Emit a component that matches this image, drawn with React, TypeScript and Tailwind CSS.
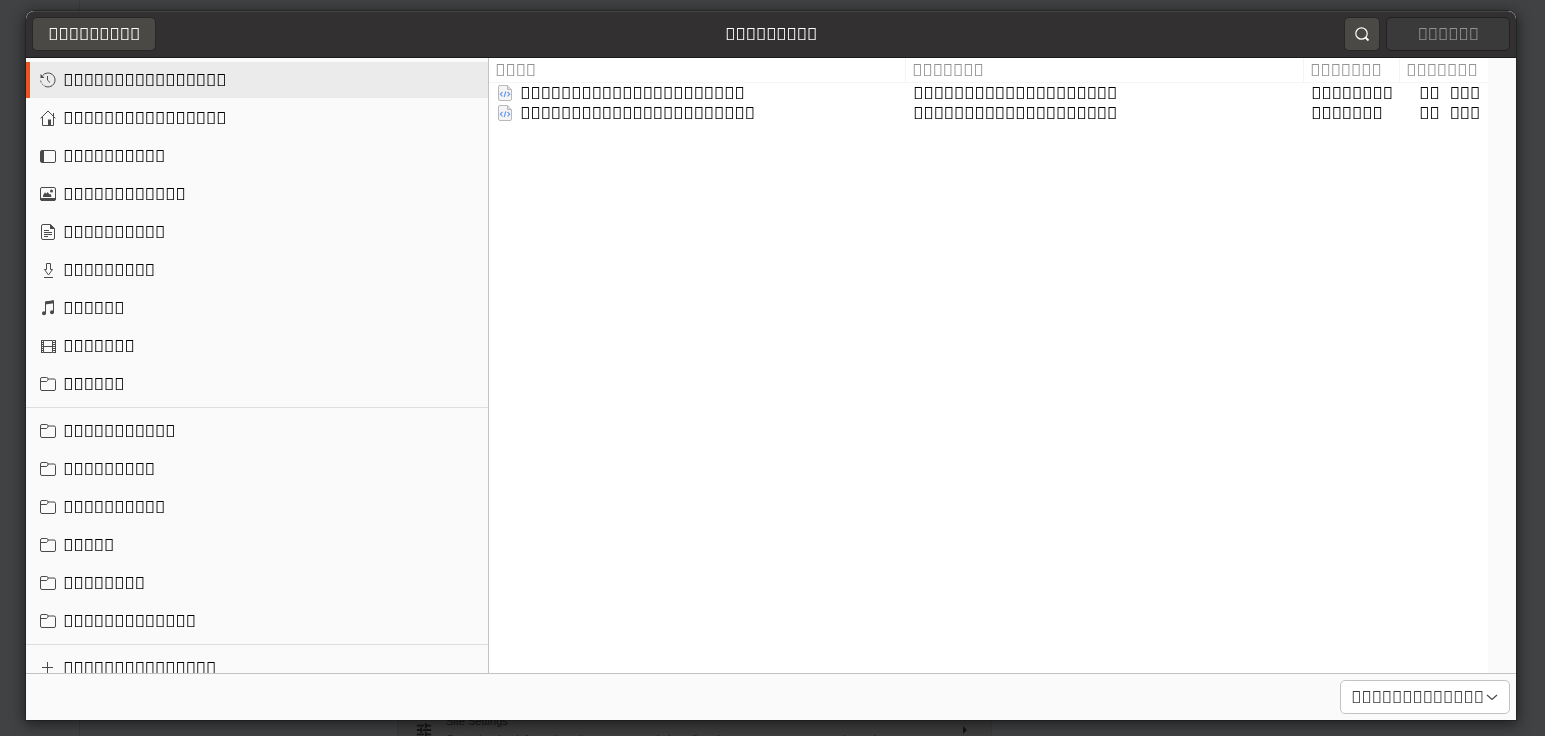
import type { ReactNode } from "react";

// the labels have no glyphs in the UI font, so each one shows as a run of empty boxes
const boxes = (count: number) => "\uE123".repeat(count);

type IconName = "recent" | "home" | "desktop" | "pictures" | "documents" | "downloads" | "music" | "videos" | "folder" | "plus";

interface Place {
    icon: IconName;
    label: string;
}

const groups: Place[][] = [
    [
        { icon: "recent", label: boxes(16) },
        { icon: "home", label: boxes(16) },
        { icon: "desktop", label: boxes(10) },
        { icon: "pictures", label: boxes(12) },
        { icon: "documents", label: boxes(10) },
        { icon: "downloads", label: boxes(9) },
        { icon: "music", label: boxes(6) },
        { icon: "videos", label: boxes(7) },
        { icon: "folder", label: boxes(6) },
    ],
    [
        { icon: "folder", label: boxes(11) },
        { icon: "folder", label: boxes(9) },
        { icon: "folder", label: boxes(10) },
        { icon: "folder", label: boxes(5) },
        { icon: "folder", label: boxes(8) },
        { icon: "folder", label: boxes(13) },
    ],
    [{ icon: "plus", label: boxes(15) }],
];

const files = [
    { name: boxes(22), location: boxes(20), size: boxes(8), day: boxes(2), month: boxes(3) },
    { name: boxes(23), location: boxes(20), size: boxes(7), day: boxes(2), month: boxes(3) },
];

const paths: Record<IconName, ReactNode> = {
    recent: (
        <>
            <path d="M2.6 3.6A7 7 0 1 1 4.500 14" />
            <path d="M3.400 13.200A7 7 0 0 1 .6 7.500" strokeDasharray="2 1.400" />
            <path d="M7.500 4v4.200l2.500 2.300" />
            <path d="M.5 2v4h4z" fill="currentColor" stroke="none" />
        </>
    ),
    home: (
        <>
            <path d="M.6 8.300 8 1l7.400 7.300M2.500 7v8.500h11V7M13.500 3v3" />
            <path d="M8 9.500h3v6H8z" fill="currentColor" stroke="none" />
        </>
    ),
    desktop: (
        <>
            <rect x=".5" y="2.500" width="15" height="12" rx="1.500" />
            <path d="M1 3h3v11H1z" fill="currentColor" stroke="none" />
        </>
    ),
    pictures: (
        <>
            <rect x=".5" y="1.500" width="15" height="13" rx="1.500" />
            <path d="M.5 12.500h15v1.200l-1 .8h-13l-1-.8z" fill="currentColor" />
            <path d="M3 11V9.500l2-3.200 1.400 1.500L7.600 6l2 2.600.7-.8 1 1.700V11z" fill="currentColor" stroke="none" />
            <circle cx="11.500" cy="5" r="1.500" fill="currentColor" stroke="none" />
        </>
    ),
    documents: (
        <>
            <path d="M3 .5h7.500l4 4V14a1.500 1.500 0 0 1-1.500 1.500H3A1.500 1.500 0 0 1 1.500 14V2A1.500 1.500 0 0 1 3 .5z" />
            <path d="M10 0v5h5z" fill="currentColor" stroke="none" />
            <path d="M4 6.500h5M4 8.500h8M4 10.500h8M4 12.500h4" />
        </>
    ),
    downloads: <path d="M6.500 1.500h4v6h2L8.500 13l-4-5.500h2zM4 15.500h9" />,
    music: (
        <>
            <path d="M5.500 13V2.200L13.500 1v11" />
            <path d="M5 1.500 14 .3v3L5 4.500z" fill="currentColor" stroke="none" />
            <circle cx="4" cy="13.300" r="2" fill="currentColor" stroke="none" />
            <circle cx="12" cy="12.300" r="2" fill="currentColor" stroke="none" />
        </>
    ),
    videos: (
        <>
            <path d="M3.500 2.500h9v12h-9zM3.500 8.500h9M1.500 2v13M15.500 2v13" />
            <path d="M2.500 2v13M14 2v13" strokeDasharray="1 1" strokeWidth="2" />
        </>
    ),
    folder: (
        <>
            <path d="M.5 4V3A1.500 1.500 0 0 1 2 1.500h4.500A1.500 1.500 0 0 1 8 3h6A1.500 1.500 0 0 1 15.500 4.500V13a1.500 1.500 0 0 1-1.500 1.500H2A1.500 1.500 0 0 1 .5 13z" />
            <path d="M.5 5.500h5.700c1 0 1-.6 1.800-1.500V3" />
        </>
    ),
    plus: <path d="M7.500 2v11M2 7.500h11" />,
};

function PlaceIcon({ name }: { name: IconName }) {
    return (
        <svg viewBox="0 0 16 16" className="size-4 shrink-0 text-[#4a4a48]" fill="none" stroke="currentColor" aria-hidden="true">
            {paths[name]}
        </svg>
    );
}

function FileIcon() {
    return (
        <svg viewBox="0 0 14 16" className="h-4 w-3.5 shrink-0" fill="none" aria-hidden="true">
            <path d="M2 .5h7.500l4 4V14a1.500 1.500 0 0 1-1.500 1.500H2A1.500 1.500 0 0 1 .5 14V2A1.500 1.500 0 0 1 2 .5z" fill="#f4f4f4" stroke="#b9b9b9" />
            <path d="M9.500.5v4h4" fill="#dedede" stroke="#b9b9b9" />
            <path d="M4.500 7 2.300 9.200l2.200 2.200M9.500 7l2.200 2.200-2.200 2.200M7.800 6.500l-1.600 5.500" stroke="#6d9af5" strokeWidth="1.200" />
        </svg>
    );
}

function BackgroundPage() {
    return (
        <div className="absolute inset-0 overflow-hidden" aria-hidden="true">
            <div className="h-full w-20 border-r border-[#393b3d]" />
            <div className="absolute bottom-0 left-[397px] flex h-6 w-[595px] items-start gap-3.5 border-x border-[#393a3b] bg-[#3e3e3e] pl-[18px] pr-6 font-['Liberation_Sans',sans-serif] text-[#161616]">
                <svg viewBox="0 0 18 18" className="mt-2.5 size-4 shrink-0" fill="none" stroke="currentColor" strokeWidth="2">
                    <path d="M1 4h8M12 4h5M11 1v6M1 9h4M8 9h9M6 6v6M1 14h8M12 14h5M11 11v6" />
                </svg>
                <div className="grow whitespace-nowrap text-[11px] leading-[18px]">
                    <p>Site Settings</p>
                    <p className="text-[#222222]">Controls what information sites can use and show (location, camera, pop-ups, and more)</p>
                </div>
                <svg viewBox="0 0 4 8" className="mt-3.5 h-2 w-1 shrink-0" fill="currentColor">
                    <path d="M0 0 4 4 0 8z" />
                </svg>
            </div>
        </div>
    );
}

export default function App() {
    return (
        <div className="relative h-screen overflow-hidden bg-[#404244] pt-[11px] pr-[29px] pb-4 pl-[26px] font-['Noto_Sans',sans-serif] text-[17px] leading-5 text-black">
            <BackgroundPage />

            <div className="relative flex h-full flex-col overflow-hidden rounded-t-lg bg-[#fafafa] shadow-[0_3px_14px_2px_rgba(0,0,0,0.5),0_0_0_1px_rgba(0,0,0,0.25)] will-change-transform">
                <header className="grid h-[47px] shrink-0 grid-cols-[1fr_auto_1fr] items-center rounded-t-lg border-t border-b border-t-[#454545] border-b-[#1d191b] bg-[#323030] px-1.5 pb-0.5">
                    <button className="h-[34px] w-[124px] rounded-[5px] border border-[#282727] bg-[#4a4945] text-white">
                        {boxes(9)}
                    </button>

                    <h1 className="text-white">{boxes(9)}</h1>

                    <div className="flex justify-end gap-1.5">
                        <button aria-label="Search" className="flex h-[34px] w-9 items-center justify-center rounded-[5px] border border-[#282727] bg-[#4a4945] text-white">
                            <svg viewBox="0 0 16 16" className="size-4" fill="none" stroke="currentColor" strokeWidth="1.200">
                                <circle cx="7.500" cy="7.500" r="5.700" />
                                <path d="m11.500 11.500 3 3" strokeWidth="1.800" />
                            </svg>
                        </button>
                        <button disabled className="h-[34px] w-[124px] rounded-[5px] border border-[#232222] bg-[#3b3a3a] text-[#929191]">
                            {boxes(6)}
                        </button>
                    </div>
                </header>

                <div className="flex min-h-0 grow">
                    <nav className="w-[463px] shrink-0 overflow-hidden border-r border-[#c3c3c3] pt-1">
                        {groups.map((group, g) => (
                            <ul key={g} className={`flex flex-col gap-0.5 ${g > 0 ? "mt-[5px] border-t border-[#dedede] pt-[5px]" : ""}`}>
                                {group.map((place, i) => (
                                    <li key={i}>
                                        <button
                                            className={`flex h-9 w-full items-center gap-[7px] border-l-4 pl-2.5 text-left ${
                                                g === 0 && i === 0 ? "border-[#e95420] bg-[#ebebeb]" : "border-transparent"
                                            }`}
                                        >
                                            <PlaceIcon name={place.icon} />
                                            {place.label}
                                        </button>
                                    </li>
                                ))}
                            </ul>
                        ))}
                    </nav>

                    <main className="mr-7 grow bg-white">
                        <table className="w-full table-fixed border-separate border-spacing-0 text-left whitespace-nowrap">
                            <thead>
                                <tr className="h-[25px] text-[#929292] [&>th]:border-b [&>th]:border-[#f4f4f4] [&>th]:p-0 [&>th]:pl-1.5 [&>th]:font-normal">
                                    <th className="border-r">{boxes(4)}</th>
                                    <th className="w-[398px] border-r">{boxes(7)}</th>
                                    <th className="w-24 border-r">{boxes(7)}</th>
                                    <th className="w-[88px]">{boxes(7)}</th>
                                </tr>
                            </thead>
                            <tbody>
                                {files.map((file, i) => (
                                    <tr key={i} className="h-5 [&>td]:p-0">
                                        <td>
                                            <span className="flex items-center gap-2 pl-[9px]">
                                                <FileIcon />
                                                {file.name}
                                            </span>
                                        </td>
                                        <td>
                                            <span className="pl-[7px]">{file.location}</span>
                                        </td>
                                        <td>
                                            <span className="pl-[7px]">{file.size}</span>
                                        </td>
                                        <td>
                                            <span className="flex justify-end gap-2.5 pr-2">
                                                <span>{file.day}</span>
                                                <span>{file.month}</span>
                                            </span>
                                        </td>
                                    </tr>
                                ))}
                            </tbody>
                        </table>
                    </main>
                </div>

                <footer className="flex shrink-0 justify-end border-t border-[#c3c3c3] p-1.5">
                    <div className="relative">
                        <select aria-label="File type" className="h-[34px] w-[170px] appearance-none rounded-[5px] border border-[#c3c3c3] bg-white pl-2.5 text-[#3d3d3d]">
                            <option>{boxes(13)}</option>
                        </select>
                        <svg viewBox="0 0 12 8" className="pointer-events-none absolute top-3.5 right-3 h-2 w-3 text-[#4a4a48]" fill="none" stroke="currentColor" strokeWidth="1.300">
                            <path d="m1 1 5 4.500L11 1" />
                        </svg>
                    </div>
                </footer>
            </div>
        </div>
    );
}
